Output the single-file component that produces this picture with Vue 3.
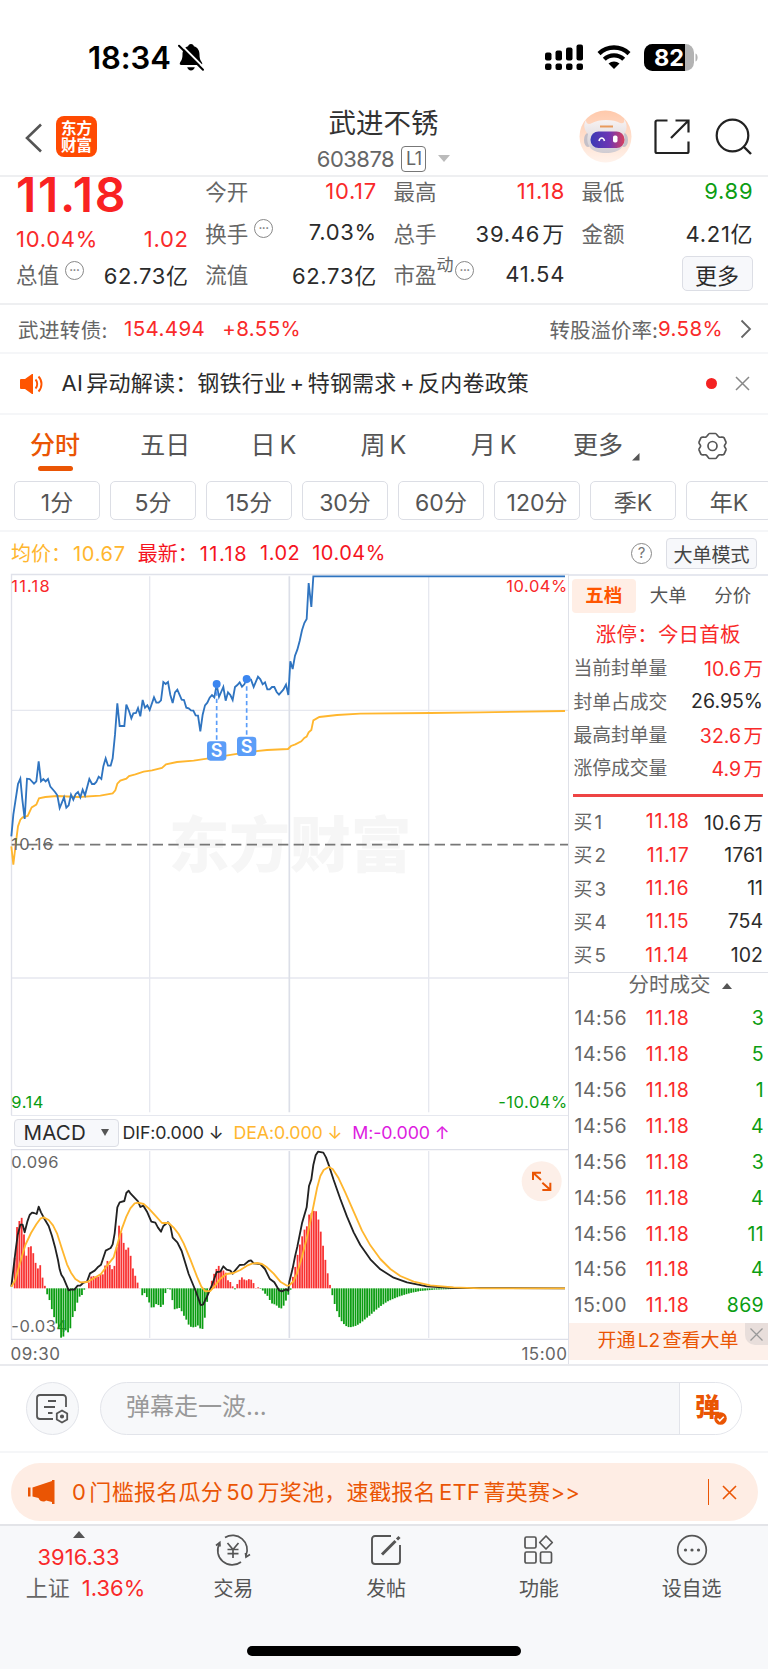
<template>
  <div class="page">
    <div class="status">
      <span class="clock">18:34</span>
      <svg class="bell" width="26" height="27" viewBox="0 0 26 27">
        <path d="M13 0c1.700 0 2.700 1 2.900 2.300 3.900 1.100 5.600 4.500 5.600 8.200 0 5 1.400 6.300 2.400 8 .8 1.400.3 2.500-1.200 2.500H3.300c-1.500 0-2-1.100-1.200-2.500 1-1.700 2.400-3 2.400-8 0-3.700 1.700-7.100 5.600-8.200C10.300 1 11.300 0 13 0zM9.200 23.200h7.600c-.5 2-1.900 3.200-3.800 3.200s-3.300-1.200-3.800-3.200z" />
        <path d="M3 .8l23.500 23.500" stroke="#fff" stroke-width="2" />
        <path d="M1 1.800l24 24" stroke="#000" stroke-width="2" stroke-linecap="round" />
      </svg>
      <svg class="signal" width="39" height="27" viewBox="0 0 39 27">
        <rect v-for="(h, i) in [8, 10, 13, 16]" :key="'a' + i" :x="i * 10.500" :y="16.500 - h" width="6.500" :height="h" rx="2" />
        <rect v-for="i in 4" :key="'b' + i" :x="(i - 1) * 10.500" y="19.500" width="6.500" height="6.500" rx="2" />
      </svg>
      <svg class="wifi" width="34" height="26" viewBox="0 0 34 26">
        <g fill="none" stroke="#000" stroke-width="4.300">
          <path d="M2 9.600a21.500 21.500 0 0 1 30 0" />
          <path d="M7.300 15.200a14 14 0 0 1 19.400 0" />
        </g>
        <path d="M11.500 19.600a8 8 0 0 1 11 0L17 25z" />
      </svg>
      <svg class="battery" width="55" height="27" viewBox="0 0 55 27">
        <defs><clipPath id="bat"><rect width="50" height="27" rx="8.500" /></clipPath></defs>
        <g clip-path="url(#bat)">
          <rect width="50" height="27" fill="#b3b3b3" />
          <rect width="41" height="27" />
        </g>
        <path d="M51.500 9.500c2.800 1 2.800 7 0 8z" fill="#b3b3b3" />
        <text x="25" y="21.500" text-anchor="middle" class="bat-text">82</text>
      </svg>
    </div>

    <div class="header">
      <svg class="back" width="18" height="30" viewBox="0 0 18 30"><path d="M16 1.500L2 15l14 13.500" fill="none" stroke="#555" stroke-width="2.600" /></svg>
      <div class="logo"><span>东方</span><span>财富</span></div>
      <div class="title">
        <div class="name">武进不锈</div>
        <div class="code"><span>603878</span><em>L1</em><i></i></div>
      </div>
      <svg class="robot" width="53" height="53" viewBox="0 0 53 53">
        <defs>
          <linearGradient id="peach" x1="0" y1="0" x2="0" y2="1"><stop offset="0" stop-color="#ffc9ab" /><stop offset="1" stop-color="#fff3ec" /></linearGradient>
          <linearGradient id="visor" x1="0" y1="0" x2="1" y2="0"><stop offset="0" stop-color="#3a3bb5" /><stop offset=".55" stop-color="#6d35b4" /><stop offset="1" stop-color="#d8405e" /></linearGradient>
          <linearGradient id="shell" x1="0" y1="0" x2="0" y2="1"><stop offset="0" stop-color="#f8f3f3" /><stop offset="1" stop-color="#d0ccd2" /></linearGradient>
        </defs>
        <circle cx="26.500" cy="26.500" r="26" fill="url(#peach)" />
        <ellipse cx="9" cy="30" rx="4" ry="7" fill="#c4c0c8" />
        <ellipse cx="45" cy="30" rx="4" ry="7" fill="#c4c0c8" />
        <path d="M7 10c0 4 3 5 6 3 4-2 8-3 14-3s11 1 14 3c3 1 5 0 4-4 4 5 3 12 0 15 3 12-4 19-18 19S6 36 9 24C5 20 4 14 7 10z" fill="url(#shell)" />
        <rect x="11.500" y="21.500" width="34" height="16.500" rx="8" fill="url(#visor)" />
        <path d="M20 31c1-4 4.500-4 5.500 0" fill="none" stroke="#fff" stroke-width="1.600" />
        <rect x="34" y="25.500" width="4.500" height="7" rx="1.800" fill="#fff" />
        <path d="M21 16.500h13" stroke="#e89a5c" stroke-width="2" />
      </svg>
      <svg class="share" width="36" height="36" viewBox="0 0 36 36">
        <path d="M13.500 1.500H3a1.500 1.500 0 0 0-1.500 1.500v29.500A1.500 1.500 0 0 0 3 34h30a1.500 1.500 0 0 0 1.500-1.500v-10M21.500 1.500h13v12M34 2L17 19" fill="none" stroke="#222" stroke-width="2.200" />
      </svg>
      <svg class="find" width="38" height="38" viewBox="0 0 38 38">
        <circle cx="17.500" cy="17.500" r="15.800" fill="none" stroke="#222" stroke-width="2.200" />
        <path d="M28.500 28.500l7.500 7.500" stroke="#222" stroke-width="2.400" />
      </svg>
    </div>

    <div class="quote">
      <div class="col first">
        <div class="price">11.18</div>
        <div class="cell red"><span>10.04%</span><span>1.02</span></div>
        <div class="cell"><label>总值<b class="dots">•••</b></label><span>62.73亿</span></div>
      </div>
      <div v-for="(col, i) in quoteCols" :key="i" class="col">
        <div v-for="c in col" :key="c.label" class="cell">
          <label>{{ c.label }}<sup v-if="c.sup">{{ c.sup }}</sup><b v-if="c.dots" class="dots">•••</b></label>
          <span :class="c.color">{{ c.value }}</span>
        </div>
        <div v-if="i === 2" class="cell"><button class="more">更多</button></div>
      </div>
    </div>

    <div class="bond">
      <label>武进转债:</label><span class="red">154.494</span><span class="red pct">+8.55%</span>
      <label class="right">转股溢价率:</label><span class="red">9.58%</span>
      <svg width="12" height="20" viewBox="0 0 12 20"><path d="M1.500 1.500L10 10l-8.500 8.500" fill="none" stroke="#666" stroke-width="1.800" /></svg>
    </div>

    <div class="ai">
      <svg width="24" height="20" viewBox="0 0 24 20">
        <path d="M1 5h4l7-5h1v20h-1l-7-5H1a1 1 0 0 1-1-1V6a1 1 0 0 1 1-1z" fill="#f50" />
        <path d="M15.500 5.500c2.300 2.300 2.300 6.700 0 9M18.500 2.500c4 4 4 11 0 15" fill="none" stroke="#f50" stroke-width="1.900" />
      </svg>
      <span>AI 异动解读：钢铁行业 + 特钢需求 + 反内卷政策</span>
      <i class="dot"></i>
      <svg width="15" height="15" viewBox="0 0 15 15"><path d="M1 1l13 13M14 1L1 14" stroke="#888" stroke-width="1.500" /></svg>
    </div>

    <div class="tabs">
      <span v-for="(t, i) in tabs" :key="t" :class="{ on: i === 0 }">{{ t }}</span>
      <svg class="tri" width="8" height="8" viewBox="0 0 8 8"><path d="M7.500 0v7.500H0z" fill="#555" /></svg>
      <svg class="gear" width="29" height="28" viewBox="0 0 29 28">
        <path d="M11.500 1.500h6c1 0 2.200 3.200 3.600 3.600 1.400.5 4-.6 4.900.6l2 4.500c.5 1.300-1.600 2.500-1.600 3.800s2.100 2.500 1.600 3.800l-2 4.500c-.9 1.200-3.500.1-4.900.6-1.400.4-2.600 3.600-3.600 3.600h-6c-1 0-2.200-3.200-3.600-3.600-1.400-.5-4 .6-4.900-.6l-2-4.500C.500 16.500 2.600 15.300 2.600 14S.5 11.500 1 10.200l2-4.500c.9-1.200 3.500-.1 4.900-.6 1.400-.4 2.600-3.600 3.600-3.600z" fill="none" stroke="#555" stroke-width="1.700" stroke-linejoin="round" />
        <circle cx="14.500" cy="14" r="4.500" fill="none" stroke="#555" stroke-width="1.700" />
      </svg>
    </div>

    <div class="periods"><button v-for="p in periods" :key="p">{{ p }}</button></div>

    <div class="avg">
      <span class="gold">均价：<b>10.67</b></span>
      <span class="bright">最新：<b>11.18</b></span>
      <b class="bright">1.02</b>
      <b class="bright">10.04%</b>
      <i class="help">?</i>
      <button>大单模式</button>
    </div>

    <div class="main">
      <div class="charts">
        <svg class="kline" width="558" height="541" viewBox="32 13 1674 1623">
          <path d="M448 20V1628M1285 20V1628M34 422H1703M34 1225H1703" stroke="#e6e8ef" stroke-width="4" />
          <path d="M867 20V1628" stroke="#dcdfe8" stroke-width="5" />
          <path d="M33.500 1636V14.500H1706" fill="none" stroke="#e0e2ea" stroke-width="4" />
          <text x="505" y="893" class="mark">东方财富</text>
          <path d="M34 825H1703" stroke="#777" stroke-width="5" stroke-dasharray="31 16" />
          <polyline :points="avgLine" fill="none" stroke="#ffb62e" stroke-width="5.500" />
          <polyline :points="priceLine" fill="none" stroke="#2f74c0" stroke-width="5.500" />
          <g v-for="m in marks" :key="m.x">
            <path :d="`M${m.x} ${m.y}V${m.to}`" stroke="#5a9dfa" stroke-width="5" stroke-dasharray="13 9" />
            <circle :cx="m.x" :cy="m.y" r="12" fill="#3b86f0" />
            <rect :x="m.x - 29" :y="m.to" width="58" height="58" rx="10" fill="#5b9df8" />
            <text :x="m.x" :y="m.to + 48" class="s">S</text>
          </g>
          <text x="33" y="67" class="ax r ones">11.18</text>
          <text x="1702" y="67" class="ax r end">10.04%</text>
          <text x="33" y="840" class="ax ones">10.16</text>
          <text x="33" y="1614" class="ax g">9.14</text>
          <text x="1702" y="1614" class="ax g end">-10.04%</text>
        </svg>
        <div class="indicator">
          <button>MACD<i></i></button>
          <span>DIF:0.000 ↓</span><span class="gold">DEA:0.000 ↓</span><span class="pink">M:-0.000 ↑</span>
        </div>
        <svg class="macd" width="558" height="191" viewBox="32 147 1674 573">
          <path d="M448 153V714M1285 153V714M33.500 147V720" stroke="#e6e8ef" stroke-width="4" />
          <path d="M867 153V714" stroke="#dcdfe8" stroke-width="5" />
          <path d="M32 149H1706M32 718H1706" stroke="#dddfe8" stroke-width="4" />
          <text x="33" y="204" class="ax">0.096</text>
          <text x="33" y="697" class="ax">-0.034</text>
          <rect v-for="b in bars" :key="b.x" :x="b.x - 2.500" :y="b.y" width="5.400" :height="b.h" :fill="b.up ? '#f93232' : '#0b9d12'" />
          <polyline :points="difLine" fill="none" stroke="#222" stroke-width="5.500" stroke-linejoin="round" />
          <polyline :points="deaLine" fill="none" stroke="#ffb62e" stroke-width="5.500" stroke-linejoin="round" />
          <circle cx="1624" cy="244" r="60" fill="#fdefe8" />
          <path d="M1598 240v-22h24M1600 220l22 20M1650 248v22h-24M1648 268l-22-20" fill="none" stroke="#ea5504" stroke-width="6" />
        </svg>
        <div class="times"><span>09:30</span><span>15:00</span></div>
      </div>

      <div class="side">
        <div class="side-tabs"><span class="on">五档</span><span>大单</span><span>分价</span></div>
        <div class="limit">涨停：今日首板</div>
        <div v-for="s in seals" :key="s.label" class="line"><label>{{ s.label }}</label><span :class="s.color">{{ s.value }}</span></div>
        <div class="bar"></div>
        <div v-for="(b, i) in bids" :key="i" class="line bid"><label>买 {{ i + 1 }}</label><span class="red">{{ b[0] }}</span><span>{{ b[1] }}</span></div>
        <div class="deals-head">分时成交<i></i></div>
        <div v-for="(d, i) in deals" :key="i" class="line deal"><label>{{ d[0] }}</label><span class="red">11.18</span><span class="green">{{ d[1] }}</span></div>
        <div class="l2">开通 L2 查看大单
          <b><svg width="13" height="13" viewBox="0 0 13 13"><path d="M.5.5l12 12M12.500.5l-12 12" stroke="#999" stroke-width="1.300" /></svg></b>
        </div>
      </div>
    </div>

    <div class="comment">
      <div class="round">
        <svg width="33" height="30" viewBox="0 0 33 30" fill="none" stroke="#555" stroke-width="1.800">
          <path d="M30 13V4a3 3 0 0 0-3-3H4a3 3 0 0 0-3 3v18a3 3 0 0 0 3 3h13" />
          <path d="M12 7h8M8 13h11M12 19h4.500" />
          <path d="M26 16.500l5.200 3v6l-5.200 3-5.200-3v-6z" />
          <circle cx="26" cy="22.500" r="1.200" fill="#555" />
        </svg>
      </div>
      <div class="input"><span>弹幕走一波...</span>
        <div class="send">弹<svg width="13" height="13" viewBox="0 0 13 13"><circle cx="6.500" cy="6.500" r="6.300" fill="#ea5504" /><path d="M3.500 6.500l2.300 2.300 4-4" fill="none" stroke="#fff" stroke-width="1.600" /></svg></div>
      </div>
    </div>

    <div class="notice">
      <div class="banner">
        <svg width="27" height="24" viewBox="0 0 27 24" fill="#ea5504"><path d="M0 7.500h2.500v9H0zM4.500 7.500L24 1V0h2.500v24H24v-2l-6-1.500c-1.500 1.800-6.500 1.200-7.500-2.500l-6-1.500z" /></svg>
        <span>0 门槛报名瓜分 50 万奖池，速戳报名 ETF 菁英赛&gt;&gt;</span>
        <i></i>
        <svg width="15" height="15" viewBox="0 0 15 15"><path d="M1 1l13 13M14 1L1 14" stroke="#ea5504" stroke-width="1.600" /></svg>
      </div>
    </div>

    <div class="footer">
      <div class="nav">
        <div class="index">
          <i></i>
          <div class="red">3916.33</div>
          <div class="sh"><label>上证</label><span class="red">1.36%</span></div>
        </div>
        <div class="item">
          <svg width="36" height="32" viewBox="0 0 36 32" fill="none" stroke="#555" stroke-width="1.700">
            <path d="M10 3.500A14.500 14.500 0 0 1 31 21.500M26 28A14.500 14.500 0 0 1 4.500 9.500" />
            <path d="M1 11.500l3.800-3 .2 4M35 20.500l-4 2.500-.5-4" />
            <path d="M12.500 9l5.500 6.500L23.500 9M18 15.500V24M12.500 15.500h11M12.500 19.700h11" />
          </svg>交易
        </div>
        <div class="item">
          <svg width="32" height="32" viewBox="0 0 32 32" fill="none" stroke="#555" stroke-width="1.900">
            <path d="M21 2H5a3 3 0 0 0-3 3v22a3 3 0 0 0 3 3h22a3 3 0 0 0 3-3V11" />
            <path d="M12 20.500L25.500 7" stroke-width="3" /><path d="M27 5.500L29.500 3" stroke-width="3" />
          </svg>发帖
        </div>
        <div class="item">
          <svg width="32" height="32" viewBox="0 0 32 32" fill="none" stroke="#555" stroke-width="1.700">
            <rect x="2" y="3" width="11" height="11" rx="1.500" /><rect x="2" y="18" width="11" height="11" rx="1.500" /><rect x="17.500" y="18" width="11" height="11" rx="1.500" />
            <path d="M23 2l6.300 6.500L23 15l-6.300-6.500z" stroke-linejoin="round" />
          </svg>功能
        </div>
        <div class="item">
          <svg width="32" height="32" viewBox="0 0 32 32" fill="none" stroke="#555" stroke-width="1.700">
            <circle cx="16" cy="16" r="14.300" />
            <g fill="#555" stroke="none"><circle cx="9.500" cy="16" r="1.600" /><circle cx="16" cy="16" r="1.600" /><circle cx="22.500" cy="16" r="1.600" /></g>
          </svg>设自选
        </div>
      </div>
      <div class="home"></div>
    </div>
  </div>
</template>

<script setup>
import { computed } from 'vue'

const quoteCols = [
  [
    { label: '今开', value: '10.17', color: 'red' },
    { label: '换手', value: '7.03%', dots: true },
    { label: '流值', value: '62.73亿' }
  ],
  [
    { label: '最高', value: '11.18', color: 'red' },
    { label: '总手', value: '39.46 万' },
    { label: '市盈', value: '41.54', sup: '动', dots: true }
  ],
  [
    { label: '最低', value: '9.89', color: 'green' },
    { label: '金额', value: '4.21亿' }
  ]
]

const tabs = ['分时', '五日', '日 K', '周 K', '月 K', '更多']
const periods = ['1分', '5分', '15分', '30分', '60分', '120分', '季K', '年K']

const seals = [
  { label: '当前封单量', value: '10.6 万', color: 'red' },
  { label: '封单占成交', value: '26.95%' },
  { label: '最高封单量', value: '32.6 万', color: 'red' },
  { label: '涨停成交量', value: '4.9 万', color: 'red' }
]
const bids = [['11.18', '10.6 万'], ['11.17', '1761'], ['11.16', '11'], ['11.15', '754'], ['11.14', '102']]
const deals = [
  ['14:56', 3], ['14:56', 5], ['14:56', 1], ['14:56', 4], ['14:56', 3],
  ['14:56', 4], ['14:56', 11], ['14:56', 4], ['15:00', 869]
]

// chart data, in viewBox units (3 per css pixel)
const priceLine = '33,800 39,735 53,643 60,627 66,690 73,748 80,627 88,628 101,642 108,635 115,575 122,635 129,628 136,635 143,628 150,651 164,667 171,677 178,715 191,683 198,714 205,707 212,675 219,690 226,673 233,667 240,683 247,660 254,677 267,628 275,643 282,643 288,637 295,621 303,628 309,590 316,566 323,588 331,588 337,566 344,495 351,401 358,469 372,469 378,405 386,424 393,446 399,431 407,430 413,415 420,440 427,391 434,414 441,407 448,421 461,383 468,399 475,399 482,392 489,337 496,343 503,337 510,376 517,400 524,368 531,360 544,390 551,391 558,414 565,416 572,422 579,423 586,437 593,438 600,485 607,435 614,407 621,399 628,384 635,376 642,383 649,345 656,382 669,352 676,393 683,368 690,376 697,391 704,352 711,346 718,338 725,351 732,344 739,328 752,330 760,352 773,321 780,329 787,344 794,338 801,359 808,359 815,352 822,352 829,367 836,375 849,360 857,345 864,376 870,275 877,298 884,258 891,240 898,214 905,182 912,160 919,148 925,40 933,112 939,20 1694,20'
const avgLine = '33,830 39,885 46,825 53,770 60,750 67,743 82,739 94,713 108,705 116,686 135,682 170,679 235,682 300,678 337,671 345,662 351,642 360,633 378,627 386,619 405,614 430,606 455,602 485,595 497,584 530,577 580,573 640,564 700,554 760,545 800,541 863,538 872,529 885,524 903,515 912,505 919,501 925,488 933,481 939,452 957,442 1010,436 1080,432 1290,430 1440,428 1694,424'
const difLine = '33,560 40,500 46,450 52,405 60,374 67,374 73,397 81,365 88,345 95,338 101,339 109,342 115,320 122,337 132,356 145,378 155,408 165,445 173,480 178,508 183,524 190,535 205,571 213,568 222,569 232,557 240,557 248,549 260,545 269,520 283,512 292,502 302,494 309,473 316,452 331,444 337,433 343,400 351,322 358,307 372,303 378,279 385,272 391,281 413,304 420,321 429,317 441,337 453,365 465,368 473,383 482,395 489,378 503,367 510,377 517,413 531,427 544,453 565,522 586,573 601,615 608,614 620,590 635,555 649,516 660,515 669,499 679,509 690,512 697,521 704,512 718,495 732,494 745,483 752,481 760,490 780,492 794,507 808,536 822,547 836,571 845,574 857,568 864,572 867,545 877,505 884,470 891,440 905,370 919,322 926,258 933,238 939,195 946,166 953,155 969,158 977,172 987,200 1000,240 1020,297 1040,350 1060,397 1080,435 1110,478 1140,508 1180,533 1220,547 1280,559 1360,564 1694,565'
const deaLine = '33,560 45,540 60,485 75,435 92,399 108,373 120,356 130,352 145,360 158,376 170,400 185,447 200,493 212,518 225,537 240,547 260,546 280,535 302,522 320,497 340,472 352,430 365,385 378,350 390,325 403,310 413,308 430,312 445,325 465,347 485,369 505,369 520,383 535,402 550,430 570,478 590,530 603,560 615,574 630,573 645,556 660,536 678,522 700,519 720,510 740,497 755,491 770,489 785,492 800,502 820,521 840,545 860,557 867,556 880,543 890,520 905,470 920,412 940,315 950,265 960,228 970,210 985,201 997,207 1015,235 1035,278 1060,335 1085,392 1110,436 1140,477 1170,507 1200,528 1240,545 1290,556 1360,562 1440,565 1694,565'
const histogram = '36,565 50,380 63,348 70,395 77,470 84,442 91,437 98,457 105,487 112,507 118,487 125,528 132,552 139,580 146,595 153,623 160,648 167,668 174,682 181,713 188,713 195,690 202,698 209,690 215,655 222,640 229,614 236,590 243,590 250,569 257,569 264,552 271,530 278,528 285,530 292,532 299,523 306,528 313,500 320,481 327,492 334,508 341,505 348,455 354,372 361,390 368,420 375,453 382,438 389,457 396,500 403,522 410,545 417,558 424,588 431,577 438,588 445,604 452,622 459,624 466,612 473,614 480,621 487,621 493,583 500,570 507,560 514,590 521,628 528,627 535,622 542,630 549,645 556,655 563,672 570,680 577,682 584,682 591,675 598,682 604,696 611,668 618,622 625,570 632,550 639,525 646,513 653,492 660,512 667,512 674,510 681,540 688,543 695,555 702,572 709,555 716,543 722,530 729,536 736,543 743,537 750,538 757,541 764,566 771,560 778,566 785,568 792,580 799,584 806,596 813,610 820,612 827,615 834,622 841,627 848,620 855,608 862,582 868,590 873,550 880,520 887,490 894,450 901,424 908,400 915,382 922,377 929,322 936,350 942,325 949,337 956,367 963,406 970,450 977,492 984,532 991,565 998,595 1005,620 1012,640 1019,657 1026,667 1033,675 1040,680 1047,682 1054,681 1068,677 1082,668 1096,656 1110,645 1124,632 1140,619 1160,605 1180,596 1200,588 1230,579 1260,573 1300,569 1360,567 1440,565'

const marks = [
  { x: 649, y: 343, to: 515 },
  { x: 739, y: 328, to: 501 }
]

// one bar per minute, interpolated between the known points
const bars = computed(() => {
  const zero = 565
  const pts = histogram.split(' ').map(p => p.split(',').map(Number))
  const out = []
  let k = 0
  for (let x = 36; x < 1430; x += 6.955) {
    while (k < pts.length - 2 && pts[k + 1][0] < x) k++
    const [x0, y0] = pts[k]
    const [x1, y1] = pts[k + 1]
    const v = y0 + (y1 - y0) * (x - x0) / (x1 - x0)
    out.push({ x, y: Math.min(v, zero), h: Math.abs(v - zero), up: v < zero })
  }
  return out
})
</script>

<style>
body { margin: 0; background: #fff; }
</style>

<style scoped>
.page { width: 768px; height: 1669px; overflow: hidden; background: #fff; color: #2b2b2b; font-family: Inter, "Noto Sans CJK SC", sans-serif; font-size: 22px; display: flex; flex-direction: column; }
.page > div { flex: none; box-sizing: border-box; }
.page * { box-sizing: border-box; }
svg { display: block; flex: none; overflow: visible; }
button { font: inherit; color: inherit; padding: 0; border: 1.500px solid #dcdee5; background: #f7f8fb; border-radius: 4px; display: flex; align-items: center; justify-content: center; flex: none; }
label { color: #666; }
i, em { font-style: normal; }
.red { color: #f92a2a !important; }
.bright { color: #f5141e; }
.green { color: #0b9d12 !important; }
.gold { color: #ffb62e; }
.pink { color: #dd1ae0; }

.status { height: 100px; padding: 14px 69px 0 88px; display: flex; align-items: center; }
.clock { font-size: 31px; font-weight: 600; color: #000; letter-spacing: -0.1px; width: 90px; white-space: nowrap; }
.signal { margin-left: auto; }
.wifi { margin-left: 13px; }
.battery { margin-left: 13px; }
.bat-text { font-size: 23.500px; font-weight: 700; fill: #fff; }

.header { height: 77px; border-bottom: 2px solid #eeeff1; display: flex; align-items: center; padding-left: 25px; }
.logo { width: 41px; height: 41px; margin: -2px 0 0 13px; border-radius: 8px; background: #ff4a02; color: #fff; font-size: 15.500px; line-height: 17px; font-weight: 700; display: flex; flex-direction: column; align-items: center; justify-content: center; }
.title { width: 200px; margin: 0 0 0 186.500px; text-align: center; display: flex; flex-direction: column; align-items: center; }
.name { font-size: 27.500px; line-height: 40px; height: 42px; color: #333; }
.code { display: flex; align-items: center; height: 28px; font-size: 22px; color: #666; letter-spacing: -0.500px; }
.code em { border: 1.500px solid #777; border-radius: 4px; width: 25px; height: 26px; font-size: 18px; line-height: 23px; margin-left: 7px; }
.code i { border: 6px solid transparent; border-top: 7px solid #bbb; border-bottom: 0; margin-left: 12px; }
.robot { margin-left: 95.500px; margin-top: -3px; }
.share { margin-left: 21.500px; margin-top: -2px; }
.find { margin-left: 25px; margin-top: -2px; }

.quote { height: 128px; border-bottom: 2px solid #eeeff1; padding-left: 17px; display: flex; gap: 17.200px; }
.col { width: 171px; flex: none; }
.cell { height: 41.500px; display: flex; justify-content: space-between; align-items: center; white-space: nowrap; letter-spacing: 0.7px; word-spacing: -4.500px; }
.cell > span:last-child { margin-right: -0.7px; }
.col:not(.first) { margin-top: -7px; }
.cell label { display: flex; align-items: center; font-size: 21.500px; letter-spacing: 0; }
.dots { width: 19px; height: 19px; border: 1.500px solid #888; border-radius: 50%; font-size: 6px; line-height: 15px; text-align: center; letter-spacing: 0; margin: -7px 0 0 6px; font-weight: 400; color: #777; }
.cell sup { font-size: 17px; line-height: 17px; margin-top: -16px; }
.cell sup + .dots { margin-left: 2px; }
.price { height: 42px; font-size: 48px; line-height: 36px; font-weight: 600; color: #f92222; letter-spacing: 1.700px; margin-left: -1px; }
.first .cell { margin-left: -1px; margin-top: -1px; }
.first .cell:nth-child(3) { height: 30px; margin-top: -1px; }
.more { width: 71px; height: 35px; margin-left: auto; margin-top: 0; letter-spacing: 0; border-radius: 5px; }

.bond { height: 49px; border-bottom: 2px solid #f5f6f8; padding: 0 16px 0 18px; display: flex; align-items: center; font-size: 20.500px; letter-spacing: 0.4px; }
.bond label { margin-right: 16px; }
.bond .pct { margin-left: 17px; }
.bond .right { margin: 0 0 0 auto; letter-spacing: 0; }
.bond svg { margin-left: 17px; }
.ai { height: 61px; border-bottom: 2px solid #f5f6f8; padding: 0 18px 0 20px; display: flex; align-items: center; }
.ai span { margin: -5px 0 0 17.500px; white-space: nowrap; letter-spacing: 0.2px; word-spacing: -3px; }
.dot { width: 11px; height: 11px; border-radius: 50%; background: #f42222; margin: 0 18px 0 auto; }

.tabs { height: 66px; display: flex; align-items: center; padding-left: 30px; font-size: 25px; color: #555; word-spacing: -3px; }
.tabs span { white-space: nowrap; width: 110.200px; flex: none; line-height: 55px; height: 60px; position: relative; }
.tabs span:nth-child(6) { width: 52px; margin-left: -8px; }
.tabs .on { color: #ea5504; font-weight: 500; }
.tabs .on::after { content: ""; position: absolute; left: 8px; bottom: 7px; width: 35px; height: 5px; border-radius: 3px; background: #ea5504; }
.tri { margin: 17px 0 0 7px; }
.gear { margin: -4px 0 0 58.500px; }

.periods { height: 51px; border-bottom: 2px solid #f5f6f8; padding-left: 14px; display: flex; gap: 10px; overflow: hidden; color: #555; font-size: 23px; letter-spacing: -0.3px; }
.periods button { width: 86px; height: 39px; background: #fff; border-radius: 5px; }

.avg { height: 42px; padding: 0 11px; display: flex; align-items: center; font-size: 20px; white-space: nowrap; }
.avg > span { margin-top: -1px; }
.avg b { font-weight: 400; letter-spacing: 0.5px; }
.avg .gold b { margin-left: 2px; letter-spacing: 0.7px; }
.avg .bright { margin-left: 12px; }
.avg span.bright b { margin-left: 2px; letter-spacing: 1.500px; }
.help { width: 21px; height: 21px; border: 1.500px solid #888; border-radius: 50%; font-size: 15px; line-height: 18px; text-align: center; color: #777; margin-left: auto; }
.avg button { width: 91px; height: 31px; font-size: 19px; color: #444; margin-left: 14px; border-radius: 4px; }

.main { height: 792px; display: flex; border-bottom: 2px solid #e9eaee; }
.charts { width: 568.500px; padding-left: 10.500px; border-right: 1.500px solid #dfe1e8; flex: none; }
.ax { font-size: 49.500px; fill: #666; letter-spacing: 1.500px; }
.ax.ones { letter-spacing: 3.500px; }
.ax.r { fill: #f92a2a; }
.ax.g { fill: #0b9d12; }
.end { text-anchor: end; }
.mark { font-size: 182px; font-weight: 900; fill: #f6f6f6; }
.s { font-size: 54px; font-weight: 600; fill: #fff; text-anchor: middle; }
.indicator { height: 34px; border-top: 1.500px solid #e6e8ef; display: flex; align-items: center; font-size: 17.800px; white-space: nowrap; letter-spacing: -0.1px; }
.indicator button { width: 105px; height: 28px; margin-left: 3px; font-size: 20.500px; justify-content: flex-start; padding-left: 9px; letter-spacing: 0.2px; }
.indicator button i { border: 4.500px solid transparent; border-top: 7px solid #555; border-bottom: 0; margin-left: 15px; }
.indicator span { margin-left: 4px; }
.indicator .gold { margin-left: 10px; }
.indicator .pink { margin-left: 10px; }
.times { height: 27px; display: flex; justify-content: space-between; align-items: center; font-size: 17px; color: #666; letter-spacing: 0.5px; }

.side { flex: 1; border-top: 2px solid #e6e8ef; word-spacing: -3px; }
.side-tabs { display: flex; height: 40px; padding: 3px 0 0 3px; color: #555; font-size: 18.500px; }
.side-tabs span { width: 64.500px; height: 34px; line-height: 33px; text-align: center; flex: none; border-radius: 4px; }
.side-tabs .on { background: #ffeee5; color: #ff5500; font-weight: 700; }
.limit { height: 35px; line-height: 37px; text-align: center; color: #f92a2a; font-size: 20.500px; letter-spacing: 0.2px; }
.line { height: 33.400px; padding: 0 5px 0 5px; display: flex; justify-content: space-between; align-items: center; font-size: 19.500px; white-space: nowrap; letter-spacing: 0; }
.line label { font-size: 18.800px; margin-top: -2px; }
.bar { margin: 9px 5px 8px 4px; height: 3px; background: #ee4444; }
.bid label { width: 54px; }
.bid .red, .deal .red { width: 62px; text-align: right; letter-spacing: 0.8px; }
.bid span:last-child, .deal span:last-child { flex: 1; text-align: right; }
.deals-head { border-top: 1.500px solid #dfe1e8; height: 29px; display: flex; align-items: center; padding: 0 0 4px 60px; font-size: 20.500px; line-height: 24px; color: #666; }
.deals-head i { border: 5px solid transparent; border-bottom: 6px solid #555; border-top: 0; margin: 2px 0 0 11px; }
.deal { height: 35.850px; padding: 0 4px 0 6px; }
.deal label { width: 53px; font-size: 19.500px; letter-spacing: 0.5px; margin-top: 0; }
.deal .green { letter-spacing: 0.3px; }
.l2 { height: 37px; background: #fdf0ea; color: #ea5504; line-height: 35px; font-size: 19px; padding-left: 29px; position: relative; white-space: nowrap; }
.l2 b { position: absolute; right: 0; top: 0; width: 23px; height: 22px; background: #e8dedb; border-radius: 0 0 0 10px; display: flex; align-items: center; justify-content: center; }

.comment { height: 87px; border-bottom: 2px solid #f5f6f8; display: flex; align-items: center; padding: 0 26px; }
.round { width: 53px; height: 53px; border-radius: 50%; border: 1.500px solid #e2e4ea; background: #f7f8fa; display: flex; align-items: center; justify-content: center; }
.input { width: 642px; height: 53px; margin-left: 21px; border: 1.500px solid #e2e4ea; border-radius: 27px; background: #f7f8fa; display: flex; overflow: hidden; color: #999; font-size: 24px; }
.input span { padding-left: 25px; line-height: 47px; flex: 1; }
.send { width: 62px; border-left: 1.500px solid #e2e4ea; background: #fff; color: #ea5504; font-weight: 900; font-size: 25px; line-height: 49px; padding-left: 15px; position: relative; }
.send svg { position: absolute; left: 34px; top: 29px; }

.notice { height: 71px; padding: 10px 10px 0 11px; }
.banner { height: 58px; border-radius: 29px; background: #feede4; color: #ea5504; display: flex; align-items: center; padding: 0 21px 0 17px; font-size: 22px; white-space: nowrap; letter-spacing: 0.3px; word-spacing: -3.300px; }
.banner span { margin: -4px 0 0 17px; }
.banner i { width: 1.500px; height: 26px; background: #ea5504; margin: 0 13px 0 auto; }

.footer { flex: 1 !important; background: #f7f8fa; border-top: 2px solid #e3e4e8; }
.nav { display: flex; height: 119.500px; }
.index { width: 157px; display: flex; flex-direction: column; align-items: center; font-size: 22px; padding-top: 5px; }
.index i { border: 6px solid transparent; border-bottom: 7px solid #555; border-top: 0; }
.index div { height: 31px; line-height: 39px; white-space: nowrap; }
.index .sh { margin-left: 14px; line-height: 38px; }
.sh label { margin-right: 12px; }
.item { width: 152.750px; display: flex; flex-direction: column; align-items: center; padding-top: 8px; font-size: 20px; line-height: 30px; gap: 8px; color: #555; }
.home { width: 274px; height: 10px; border-radius: 5px; background: #000; margin: 0 auto; }
</style>
